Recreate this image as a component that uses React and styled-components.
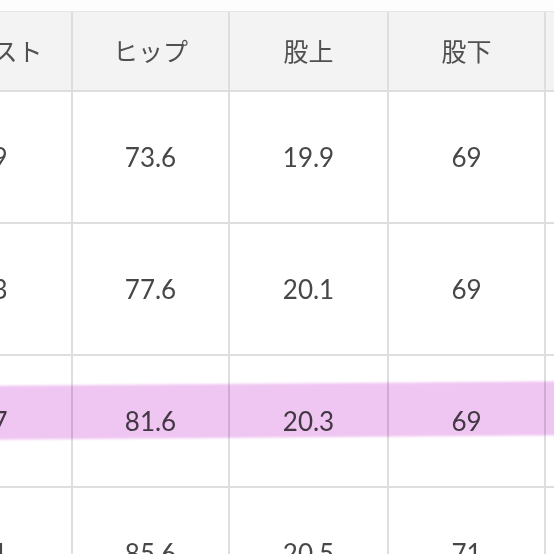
import React from "react";
import styled, { createGlobalStyle } from "styled-components";

const Global = createGlobalStyle`
  html, body { margin: 0; padding: 0; background: #fff; overflow: hidden; }
  body { width: 554px; height: 554px; }
`;

const Viewport = styled.div`
  width: 554px;
  height: 554px;
  overflow: hidden;
  background: #fdfdfd;
  padding-top: 11px;
  box-sizing: border-box;
`;

const Sheet = styled.div`
  position: relative;
  margin-left: -86px;
  width: 800px;
`;

const Grid = styled.div`
  display: grid;
  grid-template-columns: 157px 155px 157px 155px 157px;
  grid-template-rows: 78px repeat(4, 130px);
  gap: 2px;
  background: #dedede;
  border-top: 1px solid #e6e6e6;
`;

const HeadCell = styled.div`
  background: #f3f3f3;
  display: flex;
  align-items: center;
  justify-content: center;
  font-family: "Noto Sans CJK JP", "Noto Sans", sans-serif;
  font-size: 25px;
  font-weight: 400;
  color: #505050;
  padding-bottom: 2px;
`;

const Cell = styled.div`
  background: #fff;
  display: flex;
  align-items: center;
  justify-content: center;
  font-family: Lato, "Noto Sans", sans-serif;
  font-size: 26px;
  color: #474747;
`;

const Highlight = styled.div`
  position: absolute;
  left: 60px;
  right: 0;
  top: 372px;
  height: 54px;
  background: #efc3f1;
  mix-blend-mode: multiply;
  transform: rotate(-0.45deg);
  filter: blur(1px);
  opacity: 0.95;
`;

const headers = ["ウエスト", "ヒップ", "股上", "股下", "裾幅"];
const rows = [
  ["59", "73.6", "19.9", "69", "16"],
  ["63", "77.6", "20.1", "69", "17"],
  ["67", "81.6", "20.3", "69", "18"],
  ["71", "85.6", "20.5", "71", "19"],
];

export default function App() {
  return (
    <>
      <Global />
      <Viewport>
        <Sheet>
          <Grid>
            {headers.map((h) => (
              <HeadCell key={h}>{h}</HeadCell>
            ))}
            {rows.map((r, i) =>
              r.map((v, j) => <Cell key={i + "-" + j}>{v}</Cell>)
            )}
          </Grid>
          <Highlight />
        </Sheet>
      </Viewport>
    </>
  );
}
